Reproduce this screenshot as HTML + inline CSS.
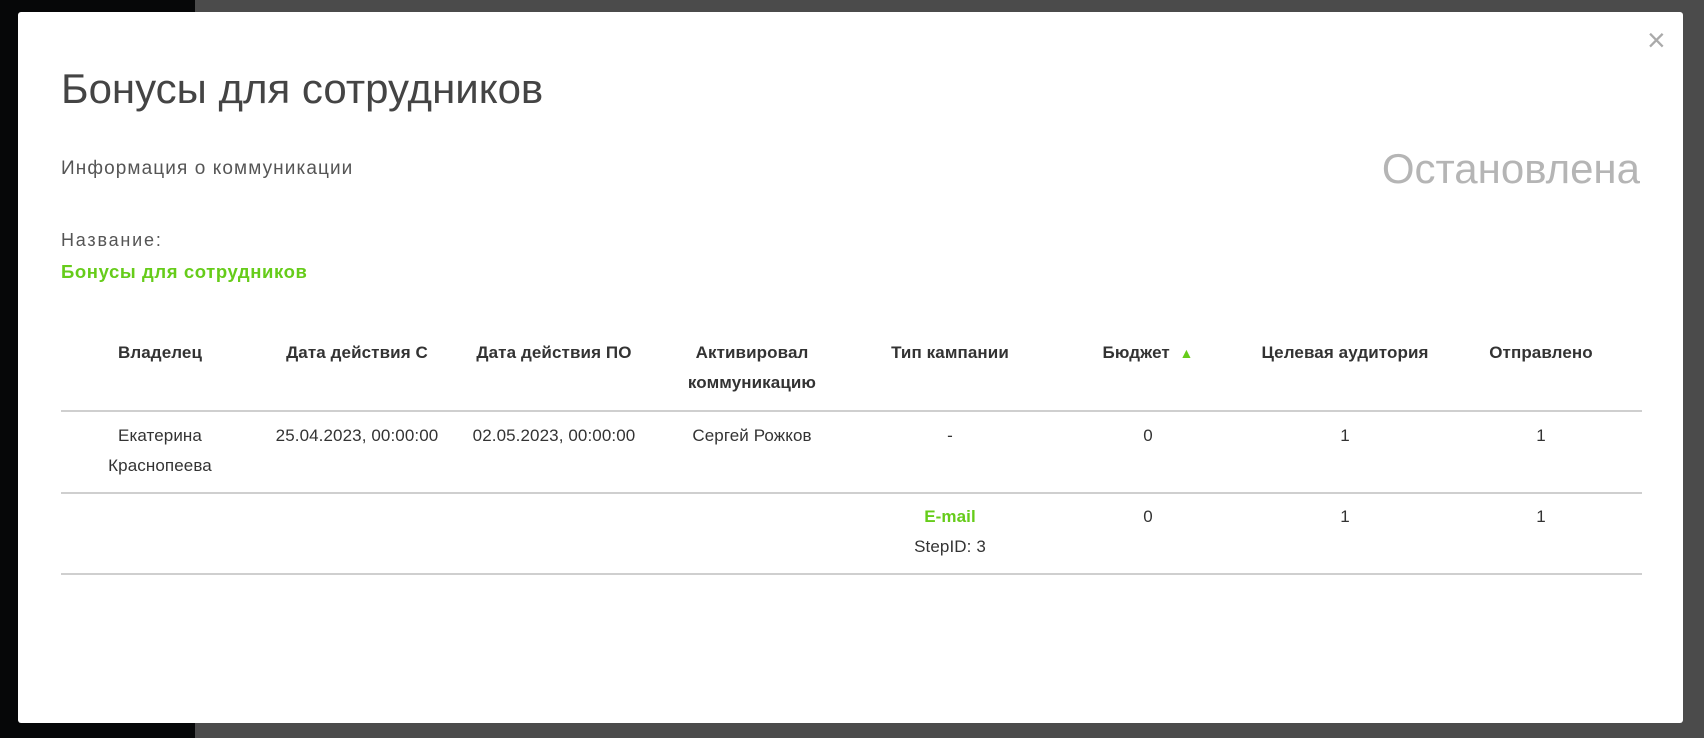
<!DOCTYPE html>
<html><head><meta charset="utf-8"><style>
html,body{margin:0;padding:0;width:1704px;height:738px;overflow:hidden;background:#4b4b4b;font-family:"Liberation Sans",sans-serif;}
.blk{position:absolute;left:0;top:0;width:195px;height:738px;background:#060708;}
.modal{position:absolute;left:18px;top:12px;width:1665px;height:711px;background:#fff;border-radius:3px;}
.t{position:absolute;white-space:nowrap;}
.cell{position:absolute;width:200px;text-align:center;font-size:17px;color:#333;line-height:30px;letter-spacing:0.1px}
.hd{font-weight:bold;}
.line{position:absolute;left:43px;width:1581px;height:2px;background:#cfcfcf;}
</style></head><body>
<div class="blk"></div>
<div class="modal">
 <div class="t" style="left:1629px;top:12px;font-size:32px;color:#aaa;line-height:32px;font-weight:300">×</div>
 <div class="t" style="left:43px;top:53px;font-size:42px;color:#444;">Бонусы для сотрудников</div>
 <div class="t" style="left:43px;top:146px;font-size:19px;color:#555;letter-spacing:1.1px">Информация о коммуникации</div>
 <div class="t" style="right:43px;top:133px;font-size:42px;color:#b5b5b5;">Остановлена</div>
 <div class="t" style="left:43px;top:218px;font-size:18px;color:#555;letter-spacing:1.8px">Название:</div>
 <div class="t" style="left:43px;top:249px;font-size:18.5px;color:#66cc1a;font-weight:bold;letter-spacing:0.6px">Бонусы для сотрудников</div>

 <div class="cell hd" style="left:42px;top:326px">Владелец</div>
 <div class="cell hd" style="left:239px;top:326px">Дата действия С</div>
 <div class="cell hd" style="left:436px;top:326px">Дата действия ПО</div>
 <div class="cell hd" style="left:634px;top:326px">Активировал<br>коммуникацию</div>
 <div class="cell hd" style="left:832px;top:326px">Тип кампании</div>
 <div class="cell hd" style="left:1030px;top:326px">Бюджет &nbsp;<span style="color:#66cc1a;font-size:14px">▲</span></div>
 <div class="cell hd" style="left:1227px;top:326px">Целевая аудитория</div>
 <div class="cell hd" style="left:1423px;top:326px">Отправлено</div>
 <div class="line" style="top:398px"></div>

 <div class="cell" style="left:42px;top:409px">Екатерина<br>Краснопеева</div>
 <div class="cell" style="left:239px;top:409px">25.04.2023, 00:00:00</div>
 <div class="cell" style="left:436px;top:409px">02.05.2023, 00:00:00</div>
 <div class="cell" style="left:634px;top:409px">Сергей Рожков</div>
 <div class="cell" style="left:832px;top:409px">-</div>
 <div class="cell" style="left:1030px;top:409px">0</div>
 <div class="cell" style="left:1227px;top:409px">1</div>
 <div class="cell" style="left:1423px;top:409px">1</div>
 <div class="line" style="top:480px"></div>

 <div class="cell" style="left:832px;top:490px"><b style="color:#66cc1a">E-mail</b><br>StepID: 3</div>
 <div class="cell" style="left:1030px;top:490px">0</div>
 <div class="cell" style="left:1227px;top:490px">1</div>
 <div class="cell" style="left:1423px;top:490px">1</div>
 <div class="line" style="top:561px"></div>
</div>
</body></html>
